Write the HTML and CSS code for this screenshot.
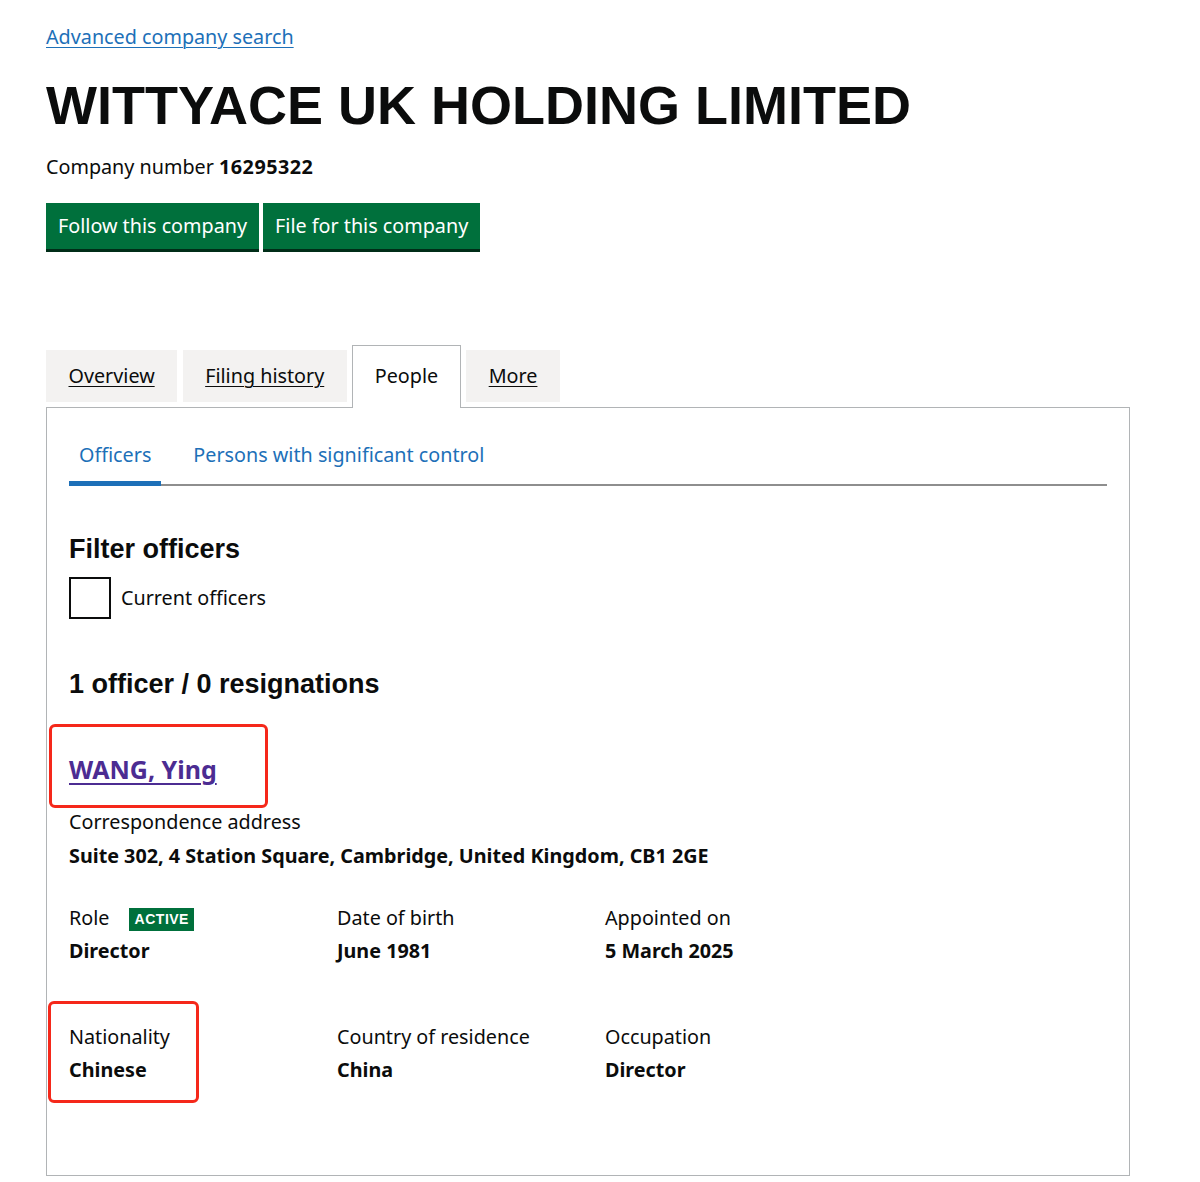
FILE: index.html
```html
<!DOCTYPE html>
<html lang="en">
<head>
<meta charset="utf-8">
<title>WITTYACE UK HOLDING LIMITED - People</title>
<link rel="stylesheet" href="styles.css">
</head>
<body>
<div class="page">
  <a class="back-link" href="#">Advanced company search</a>
  <h1 class="company-name">WITTYACE UK HOLDING LIMITED</h1>
  <p class="company-number">Company number <strong>16295322</strong></p>
  <div class="actions">
    <a class="button" href="#">Follow this company</a>
    <a class="button" href="#">File for this company</a>
  </div>

  <ul class="tabs">
    <li class="tab"><a href="#">Overview</a></li>
    <li class="tab"><a href="#">Filing history</a></li>
    <li class="tab tab-selected"><span>People</span></li>
    <li class="tab"><a href="#">More</a></li>
  </ul>

  <div class="panel">
    <ul class="subtabs">
      <li class="subtab subtab-selected"><a href="#">Officers</a></li>
      <li class="subtab"><a href="#">Persons with significant control</a></li>
    </ul>

    <h2 class="heading filter-heading">Filter officers</h2>
    <label class="checkbox">
      <span class="checkbox-box"></span>
      <span class="checkbox-label">Current officers</span>
    </label>

    <h2 class="heading count-heading">1 officer / 0 resignations</h2>

    <div class="officer">
      <div class="officer-name-wrap">
        <a class="officer-name" href="#">WANG, Ying</a>
        <span class="mark mark-name"></span>
      </div>
      <dl class="address">
        <dt class="label">Correspondence address</dt>
        <dd class="value">Suite 302, 4 Station Square, Cambridge, United Kingdom, CB1 2GE</dd>
      </dl>
      <div class="grid">
        <dl class="cell">
          <dt class="label">Role <span class="tag">Active</span></dt>
          <dd class="value">Director</dd>
        </dl>
        <dl class="cell">
          <dt class="label">Date of birth</dt>
          <dd class="value">June 1981</dd>
        </dl>
        <dl class="cell">
          <dt class="label">Appointed on</dt>
          <dd class="value">5 March 2025</dd>
        </dl>
      </div>
      <div class="grid grid-second">
        <dl class="cell cell-marked">
          <dt class="label">Nationality</dt>
          <dd class="value">Chinese</dd>
          <span class="mark mark-nationality"></span>
        </dl>
        <dl class="cell">
          <dt class="label">Country of residence</dt>
          <dd class="value">China</dd>
        </dl>
        <dl class="cell">
          <dt class="label">Occupation</dt>
          <dd class="value">Director</dd>
        </dl>
      </div>
    </div>
  </div>
</div>
</body>
</html>
```

FILE: styles.css
```css
* { box-sizing: border-box; }

html, body {
  margin: 0;
  padding: 0;
  background: #ffffff;
}

body {
  font-family: "Noto Sans", "Liberation Sans", Arial, sans-serif;
  font-size: 19.75px;
  line-height: 26px;
  color: #0b0c0c;
}

.page {
  width: 1084px;
  margin-left: 46px;
  padding-top: 24px;
}

.back-link {
  display: inline-block;
  color: #1d70b8;
  text-decoration: underline;
  text-underline-offset: 3px;
  text-decoration-thickness: 1px;
}

.company-name {
  margin: 25px 0 0;
  font-family: "Liberation Sans", Arial, sans-serif;
  font-weight: 700;
  font-size: 54px;
  line-height: 60px;
}

.company-number {
  margin: 19px 0 0;
}

.company-number strong {
  font-weight: 700;
  letter-spacing: 0.5px;
}

.actions {
  display: flex;
  gap: 4px;
  margin-top: 23px;
}

.button {
  display: inline-block;
  height: 46px;
  padding: 10px 12px;
  background: #00703c;
  color: #ffffff;
  text-decoration: none;
  box-shadow: 0 3px 0 #002d18;
}

.tabs {
  display: flex;
  align-items: flex-start;
  list-style: none;
  margin: 96px 0 0;
  padding: 0;
  position: relative;
  z-index: 1;
}

.tab {
  margin: 5px 5.5px 0 0;
  padding: 13px 22.5px;
  background: #f3f2f1;
}

.tab a {
  color: #0b0c0c;
  text-decoration: underline;
  text-underline-offset: 3px;
  text-decoration-thickness: 1px;
}

.tab-selected {
  margin-top: 0;
  margin-bottom: -1px;
  padding: 17px 21.5px 19px;
  border: 1px solid #b1b4b6;
  border-bottom: 0;
  background: #ffffff;
}

.panel {
  border: 1px solid #b1b4b6;
  padding: 34px 22px 92px;
}

.subtabs {
  display: flex;
  list-style: none;
  margin: 0;
  padding: 0;
  box-shadow: inset 0 -2px 0 #8e8e8e;
}

.subtab {
  margin-right: 22px;
  padding: 0 10px 13px;
  border-bottom: 5px solid transparent;
}

.subtab a {
  color: #1d70b8;
  text-decoration: none;
}

.subtab-selected {
  border-bottom-color: #1d70b8;
}

.heading {
  margin: 0;
  font-family: "Liberation Sans", Arial, sans-serif;
  font-weight: 700;
  font-size: 27px;
  line-height: 32px;
}

.filter-heading {
  margin-top: 47px;
}

.checkbox {
  display: flex;
  align-items: center;
  margin-top: 12px;
}

.checkbox-box {
  width: 42px;
  height: 42px;
  border: 2px solid #0b0c0c;
  background: #ffffff;
  flex: none;
}

.checkbox-label {
  margin-left: 10px;
}

.count-heading {
  margin-top: 49px;
}

.officer {
  margin-top: 53px;
}

.officer-name-wrap {
  position: relative;
  display: inline-block;
}

.officer-name {
  font-weight: 700;
  font-size: 25px;
  line-height: 32px;
  color: #4c2c92;
  text-decoration: underline;
  text-underline-offset: 4px;
  text-decoration-thickness: 2px;
}

.mark {
  position: absolute;
  border: 3px solid #f5281a;
  border-radius: 6px;
  pointer-events: none;
}

.mark-name {
  left: -20px;
  top: -29px;
  width: 219px;
  height: 84px;
}

dl, dt, dd {
  margin: 0;
}

.address {
  margin-top: 24px;
}

.value {
  margin-top: 8px;
  font-weight: 700;
}

.grid {
  display: grid;
  grid-template-columns: 268px 268px 268px;
  margin-top: 36px;
}

.grid-second {
  margin-top: 60px;
}

.cell {
  position: relative;
}

.cell .value {
  margin-top: 7px;
}

.tag {
  display: inline-block;
  margin-left: 14px;
  padding: 0 5px 0 6px;
  height: 23px;
  line-height: 23px;
  vertical-align: 1px;
  background: #00703c;
  color: #ffffff;
  font-family: "Liberation Sans", Arial, sans-serif;
  font-weight: 700;
  font-size: 14px;
  letter-spacing: 0.5px;
  text-transform: uppercase;
}

.mark-nationality {
  left: -21px;
  top: -23px;
  width: 151px;
  height: 102px;
}
```
